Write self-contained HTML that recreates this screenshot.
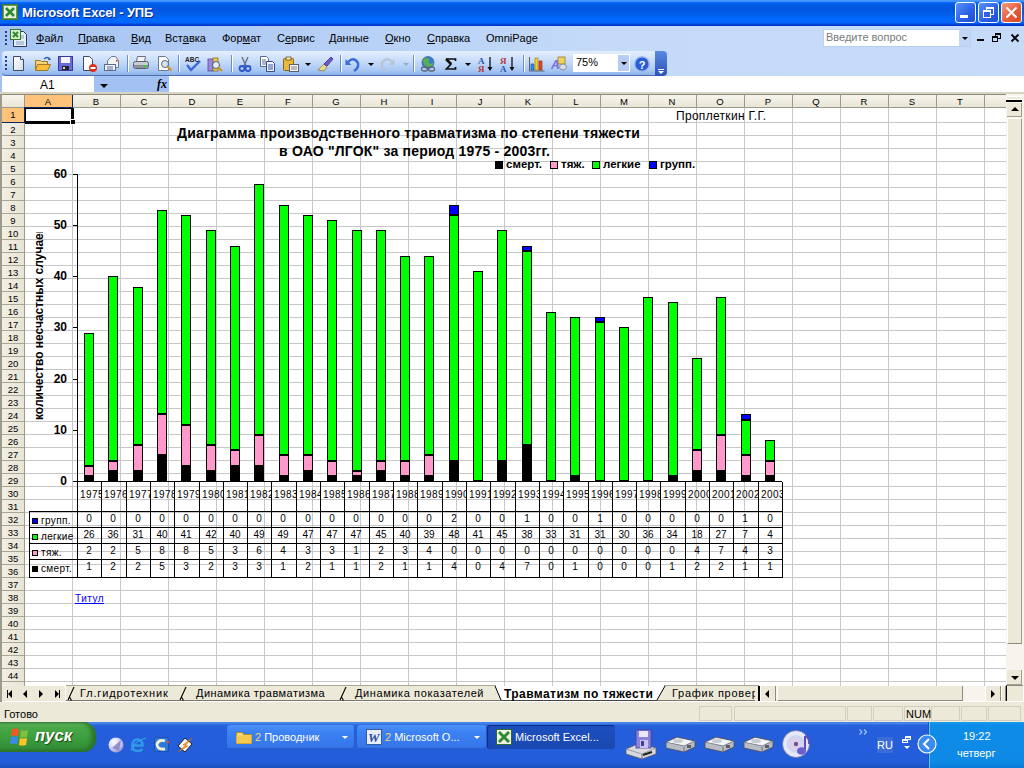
<!DOCTYPE html><html><head><meta charset="utf-8"><style>
*{margin:0;padding:0;box-sizing:border-box}
html,body{width:1024px;height:768px;overflow:hidden;background:#fff;font-family:"Liberation Sans",sans-serif;}
.ab{position:absolute}
.t{position:absolute;white-space:nowrap;line-height:1}
</style></head><body>
<div class="ab" style="left:0;top:0;width:1024px;height:26px;background:linear-gradient(to bottom,#4A98FF 0px,#3E90FF 1.5px,#0A6AF8 2.5px,#005CE6 4px,#0056DD 8px,#0058E2 11px,#0060EE 15px,#0068FF 18px,#0066FF 23px,#0046DA 24px,#0034C8 26px)"></div><svg class="ab" style="left:2px;top:4px" width="16" height="16" viewBox="0 0 16 16"><rect x="0.5" y="0.5" width="15" height="15" fill="#E8F0E0" stroke="#3F7A2C"/><rect x="1.5" y="1.5" width="13" height="13" fill="none" stroke="#6A9A50"/><path d="M4 4l8 8M12 4l-8 8" stroke="#2E8A2E" stroke-width="2.6"/></svg><div class="t" style="left:22px;top:6px;font-size:13px;letter-spacing:-0.15px;font-weight:bold;color:#fff;text-shadow:1px 1px 0 #0A2A8A">Microsoft Excel - УПБ</div><div class="ab" style="left:955px;top:2px;width:21px;height:21px;border:1px solid #fff;border-radius:3px;background:linear-gradient(135deg,#5B92F8,#2A5FE8 60%,#1E4FD8)"></div><div class="ab" style="left:978px;top:2px;width:21px;height:21px;border:1px solid #fff;border-radius:3px;background:linear-gradient(135deg,#5B92F8,#2A5FE8 60%,#1E4FD8)"></div><div class="ab" style="left:1001px;top:2px;width:21px;height:21px;border:1px solid #fff;border-radius:3px;background:linear-gradient(135deg,#F59A80,#E35A38 60%,#D24A28)"></div><div class="ab" style="left:960px;top:15px;width:8px;height:3px;background:#fff"></div><div class="ab" style="left:986px;top:7px;width:8px;height:8px;border:1px solid #fff;border-top-width:2px"></div><div class="ab" style="left:983px;top:10px;width:8px;height:8px;border:1px solid #fff;border-top-width:2px;background:#2D62E6"></div><svg class="ab" style="left:1005px;top:6px" width="13" height="13" viewBox="0 0 13 13"><path d="M1.5 1.5l10 10M11.5 1.5l-10 10" stroke="#fff" stroke-width="2"/></svg><div class="ab" style="left:0;top:26px;width:1024px;height:50px;background:linear-gradient(to right,#A6C4F2 0,#B4CEF5 300px,#C4DAF8 600px,#C6DBF8 100%)"></div><div class="ab" style="left:5px;top:31px;width:2px;height:14px;background:repeating-linear-gradient(to bottom,#27418A 0 2px,transparent 2px 4px)"></div><svg class="ab" style="left:10px;top:29px" width="17" height="18" viewBox="0 0 17 18"><path d="M3.5 2.5h10l3 3v12h-13z" fill="#E6EEF8" stroke="#2A3A60"/><path d="M10 7h4M10 9h4M6 13h8M6 15h8" stroke="#8AA0C8"/><rect x="0.5" y="0.5" width="10" height="10" fill="#D8ECD0" stroke="#3A7A2A"/><path d="M3 3l5 5M8 3l-5 5" stroke="#2E8A2E" stroke-width="2"/></svg><div class="t" style="left:36px;top:33px;font-size:11px;color:#000"><u>Ф</u>айл</div><div class="t" style="left:78px;top:33px;font-size:11px;color:#000"><u>П</u>равка</div><div class="t" style="left:131px;top:33px;font-size:11px;color:#000"><u>В</u>ид</div><div class="t" style="left:165px;top:33px;font-size:11px;color:#000">Вст<u>а</u>вка</div><div class="t" style="left:222px;top:33px;font-size:11px;color:#000">Фор<u>м</u>ат</div><div class="t" style="left:277px;top:33px;font-size:11px;color:#000">С<u>е</u>рвис</div><div class="t" style="left:329px;top:33px;font-size:11px;color:#000"><u>Д</u>анные</div><div class="t" style="left:385px;top:33px;font-size:11px;color:#000"><u>О</u>кно</div><div class="t" style="left:427px;top:33px;font-size:11px;color:#000"><u>С</u>правка</div><div class="t" style="left:486px;top:33px;font-size:11px;color:#000">OmniPage</div><div class="ab" style="left:823px;top:29px;width:148px;height:18px;background:#fff;border:1px solid #B9CFEF"></div><div class="ab" style="left:959px;top:30px;width:11px;height:16px;background:#C2D6F5"></div><div class="ab" style="left:962px;top:37px;width:0;height:0;border-left:3px solid transparent;border-right:3px solid transparent;border-top:3px solid #000"></div><div class="t" style="left:826px;top:32px;font-size:11px;color:#7A7A7A">Введите вопрос</div><div class="ab" style="left:977px;top:39px;width:7px;height:2px;background:#000"></div><div class="ab" style="left:995px;top:33px;width:6px;height:6px;border:1px solid #000;border-top-width:2px"></div><div class="ab" style="left:992px;top:36px;width:6px;height:6px;border:1px solid #000;border-top-width:2px;background:#C4D9F7"></div><svg class="ab" style="left:1010px;top:33px" width="10" height="10" viewBox="0 0 10 10"><path d="M1.5 1.5l7 7M8.5 1.5l-7 7" stroke="#000" stroke-width="1.8"/></svg><div class="ab" style="left:2px;top:51px;width:655px;height:25px;border-radius:4px 0 0 4px;background:linear-gradient(to bottom,#E3EFFE 0%,#C9DDFA 40%,#A8C8F4 80%,#8CB2EA 100%);border-bottom:1px solid #4A6FB0"></div><div class="ab" style="left:655px;top:51px;width:12px;height:25px;border-radius:0 4px 4px 0;background:linear-gradient(to bottom,#5A8AE0,#2A52B8)"></div><div class="ab" style="left:5px;top:56px;width:2px;height:16px;background:repeating-linear-gradient(to bottom,#27418A 0 2px,transparent 2px 4px)"></div><svg width="0" height="0" style="position:absolute"><defs><linearGradient id="gdoc" x1="0" y1="0" x2="1" y2="1"><stop offset="0" stop-color="#fff"/><stop offset="1" stop-color="#D8DCE6"/></linearGradient></defs></svg><svg class="ab" style="left:12px;top:56px" width="16" height="16" viewBox="0 0 16 16"><path d="M1.5 0.5h7l3 3v11h-10z" fill="#fff" stroke="#3A4A6A" stroke-width="1"/><path d="M2 1h6v3h3v10H2z" fill="url(#gdoc)"/><path d="M8.5 0.5v3h3" fill="#fff" stroke="#3A4A6A"/></svg><svg class="ab" style="left:35px;top:56px" width="16" height="16" viewBox="0 0 16 16"><path d="M0.5 4.5h5l1 1h6v8h-12z" fill="#F2D27A" stroke="#A07820"/><path d="M2.5 8.5h13l-3 6h-12z" fill="#F6BE3A" stroke="#A07820"/><path d="M9 3q3-3 6 0" fill="none" stroke="#2A5AA8" stroke-width="1.3"/><path d="M14 1.5l2 2.5h-3z" fill="#2A5AA8"/></svg><svg class="ab" style="left:58px;top:56px" width="16" height="16" viewBox="0 0 16 16"><rect x="0.5" y="0.5" width="14" height="14" fill="#6A6AD8" stroke="#3A3A98"/><rect x="3" y="1" width="9" height="6" fill="#F4F4FF"/><rect x="4" y="10" width="7" height="4" fill="#222"/><rect x="5" y="11" width="2" height="2" fill="#ddd"/></svg><svg class="ab" style="left:82px;top:56px" width="16" height="16" viewBox="0 0 16 16"><path d="M1.5 0.5h6l3 3v11h-9z" fill="#fff" stroke="#3A4A6A"/><circle cx="11" cy="12" r="4" fill="#D8301A"/><rect x="8.5" y="11" width="5" height="2" fill="#fff"/></svg><svg class="ab" style="left:104px;top:56px" width="16" height="16" viewBox="0 0 16 16"><path d="M3.5 4.5l4-4h4l3 4v7h-11z" fill="#F2F2F2" stroke="#6A7A90"/><rect x="12" y="4" width="1.5" height="1.5" fill="#D02020"/><rect x="0.5" y="8.5" width="11" height="6" fill="#EEF2FA" stroke="#5A6A88"/><path d="M3 11h6M3 13h6" stroke="#5A6A98"/></svg><svg class="ab" style="left:133px;top:56px" width="16" height="16" viewBox="0 0 16 16"><path d="M4.5 0.5h8l-1 5h-8z" fill="#F4F4F4" stroke="#6A7080"/><rect x="0.5" y="5.5" width="15" height="7" rx="2" fill="#C8CCD4" stroke="#5A6070"/><rect x="1" y="9" width="14" height="3" fill="#8A909C"/><rect x="11" y="9" width="2" height="2" fill="#20E020"/></svg><svg class="ab" style="left:157px;top:56px" width="16" height="16" viewBox="0 0 16 16"><path d="M1.5 0.5h7l3 3v11h-10z" fill="#fff" stroke="#6A7A90"/><circle cx="8" cy="8" r="3.5" fill="#D8E4F4" stroke="#5A6A80"/><path d="M10.5 10.5l4 4" stroke="#D89020" stroke-width="2.2"/></svg><svg class="ab" style="left:185px;top:56px" width="16" height="16" viewBox="0 0 16 16"><text x="0" y="6" font-family="Liberation Sans" font-weight="bold" font-size="6.5" fill="#222">ABC</text><path d="M2 9l4 5l9-9" fill="none" stroke="#3A66D8" stroke-width="2.4"/></svg><svg class="ab" style="left:207px;top:56px" width="16" height="16" viewBox="0 0 16 16"><rect x="1" y="3" width="5" height="12" fill="#9A88E0" stroke="#5A48A0" stroke-width="0.8"/><rect x="6" y="2" width="5" height="13" fill="#E8C860" stroke="#8A7020" stroke-width="0.8"/><circle cx="9" cy="9" r="3.5" fill="#E6ECF4" stroke="#4A5A70"/><path d="M11.5 11.5l3.5 3.5" stroke="#D89020" stroke-width="2.2"/></svg><svg class="ab" style="left:237px;top:56px" width="16" height="16" viewBox="0 0 16 16"><path d="M5 1l4 9M11 1l-4 9" stroke="#6A7080" stroke-width="1.4"/><circle cx="5" cy="12.5" r="2.5" fill="none" stroke="#2A56C8" stroke-width="1.8"/><circle cx="11" cy="12.5" r="2.5" fill="none" stroke="#2A56C8" stroke-width="1.8"/></svg><svg class="ab" style="left:260px;top:56px" width="16" height="16" viewBox="0 0 16 16"><path d="M0.5 0.5h6l2 2v8h-8z" fill="#fff" stroke="#5A6A90"/><path d="M2 4h4M2 6h4M2 8h4" stroke="#5A6A98"/><path d="M6.5 5.5h6l2 2v8h-8z" fill="#EEF2FA" stroke="#3A4A88"/><path d="M8 9h5M8 11h5M8 13h5" stroke="#3A5AA8"/></svg><svg class="ab" style="left:283px;top:56px" width="16" height="16" viewBox="0 0 16 16"><rect x="0.5" y="2.5" width="10" height="12" rx="1" fill="#E8B838" stroke="#8A6A10"/><rect x="3" y="1" width="5" height="3" fill="#F4E8B0" stroke="#6A5A20" stroke-width="0.8"/><rect x="6.5" y="8.5" width="9" height="7" fill="#F4F4F4" stroke="#5A6070"/><path d="M8 11h6M8 13h6" stroke="#7A8090"/></svg><svg class="ab" style="left:317px;top:56px" width="16" height="16" viewBox="0 0 16 16"><path d="M1 14l6-6l3 3l-3 4z" fill="#E8D890" stroke="#8A7A30" stroke-width="0.8"/><path d="M7 8l7-7l2 2l-6 7z" fill="#6A5AC8" stroke="#3A2A88" stroke-width="0.8"/><path d="M3 12l4-4" stroke="#A89A50"/></svg><svg class="ab" style="left:345px;top:56px" width="16" height="16" viewBox="0 0 16 16"><path d="M3 6q6-6 10 1q1 5-4 8" fill="none" stroke="#3A6AD8" stroke-width="2.4"/><path d="M0.5 3v6h6z" fill="#3A6AD8"/></svg><svg class="ab" style="left:379px;top:56px" width="16" height="16" viewBox="0 0 16 16"><path d="M13 6q-6-6-10 1q-1 5 4 8" fill="none" stroke="#B8C4D8" stroke-width="2.4"/><path d="M15.5 3v6h-6z" fill="#B8C4D8"/></svg><svg class="ab" style="left:420px;top:56px" width="16" height="16" viewBox="0 0 16 16"><circle cx="8" cy="6.5" r="6" fill="#3A7AD8" stroke="#2A4A8A" stroke-width="0.6"/><path d="M3 4q2-3 5-2q2 1 1 3q-1 2 1 3q2 0 3-2q1 2-1 4q-3 2-6 0q-3-2-3-6z" fill="#5AB04A"/><rect x="1.5" y="11" width="6" height="4" rx="2" fill="none" stroke="#5A6A80" stroke-width="1.3"/><rect x="8.5" y="11" width="6" height="4" rx="2" fill="none" stroke="#5A6A80" stroke-width="1.3"/></svg><svg class="ab" style="left:443px;top:56px" width="16" height="16" viewBox="0 0 16 16"><path d="M3 3h9.5v2M3.5 3l4.5 5l-4.5 5h9v-2" fill="none" stroke="#111" stroke-width="1.7"/><path d="M3 3l5 5" stroke="#111" stroke-width="2.6"/></svg><svg class="ab" style="left:478px;top:56px" width="16" height="16" viewBox="0 0 16 16"><text x="0" y="7.5" font-family="Liberation Serif" font-weight="bold" font-size="9" fill="#2A56B8">A</text><text x="0" y="16" font-family="Liberation Serif" font-weight="bold" font-size="9" fill="#B83A3A">Я</text><path d="M12 1v13" stroke="#111" stroke-width="1.3"/><path d="M9.5 11l2.5 4l2.5-4z" fill="#111"/></svg><svg class="ab" style="left:500px;top:56px" width="16" height="16" viewBox="0 0 16 16"><text x="0" y="7.5" font-family="Liberation Serif" font-weight="bold" font-size="9" fill="#B83A3A">Я</text><text x="0" y="16" font-family="Liberation Serif" font-weight="bold" font-size="9" fill="#2A56B8">A</text><path d="M12 1v13" stroke="#111" stroke-width="1.3"/><path d="M9.5 11l2.5 4l2.5-4z" fill="#111"/></svg><svg class="ab" style="left:529px;top:56px" width="16" height="16" viewBox="0 0 16 16"><path d="M0.5 1v14h15" fill="none" stroke="#5A6070"/><rect x="2" y="8" width="3" height="6" fill="#3A8AE8" stroke="#1A4A98" stroke-width="0.6"/><rect x="6" y="2" width="3" height="12" fill="#F0D030" stroke="#9A7A10" stroke-width="0.6"/><rect x="10" y="5" width="3" height="9" fill="#E04A2A" stroke="#8A2A10" stroke-width="0.6"/></svg><svg class="ab" style="left:551px;top:56px" width="16" height="16" viewBox="0 0 16 16"><rect x="7" y="1" width="7" height="7" fill="#F0D060" stroke="#9A8030" stroke-width="0.8"/><text x="0" y="13" font-family="Liberation Sans" font-style="italic" font-weight="bold" font-size="12" fill="#7A6AD8">A</text><ellipse cx="12" cy="11" rx="3.5" ry="3" fill="#D8DCE4" stroke="#7A808C" stroke-width="0.8"/></svg><svg class="ab" style="left:634px;top:56px" width="16" height="16" viewBox="0 0 16 16"><circle cx="8" cy="8" r="7.2" fill="#2A5ED8" stroke="#9AB4E8" stroke-width="1.2"/><text x="8" y="12.5" text-anchor="middle" font-family="Liberation Sans" font-weight="bold" font-size="11" fill="#fff">?</text></svg><div class="ab" style="left:127px;top:55px;width:1px;height:17px;background:#6A8CC8;box-shadow:1px 0 0 #fff"></div><div class="ab" style="left:178px;top:55px;width:1px;height:17px;background:#6A8CC8;box-shadow:1px 0 0 #fff"></div><div class="ab" style="left:231px;top:55px;width:1px;height:17px;background:#6A8CC8;box-shadow:1px 0 0 #fff"></div><div class="ab" style="left:340px;top:55px;width:1px;height:17px;background:#6A8CC8;box-shadow:1px 0 0 #fff"></div><div class="ab" style="left:413px;top:55px;width:1px;height:17px;background:#6A8CC8;box-shadow:1px 0 0 #fff"></div><div class="ab" style="left:523px;top:55px;width:1px;height:17px;background:#6A8CC8;box-shadow:1px 0 0 #fff"></div><div class="ab" style="left:305px;top:63px;width:0;height:0;border-left:3px solid transparent;border-right:3px solid transparent;border-top:3px solid #000"></div><div class="ab" style="left:368px;top:63px;width:0;height:0;border-left:3px solid transparent;border-right:3px solid transparent;border-top:3px solid #000"></div><div class="ab" style="left:403px;top:63px;width:0;height:0;border-left:3px solid transparent;border-right:3px solid transparent;border-top:3px solid #9AAAC4"></div><div class="ab" style="left:465px;top:63px;width:0;height:0;border-left:3px solid transparent;border-right:3px solid transparent;border-top:3px solid #000"></div><div class="ab" style="left:573px;top:54px;width:57px;height:18px;background:#fff;border:1px solid #fff"></div><div class="ab" style="left:618px;top:55px;width:11px;height:16px;background:#B6CCF2"></div><div class="ab" style="left:621px;top:62px;width:0;height:0;border-left:3px solid transparent;border-right:3px solid transparent;border-top:3px solid #000"></div><div class="t" style="left:576px;top:57px;font-size:11px;color:#000">75%</div><div class="ab" style="left:658px;top:69px;width:6px;height:1px;background:#fff"></div><div class="ab" style="left:658px;top:71px;width:0;height:0;border-left:3px solid transparent;border-right:3px solid transparent;border-top:3px solid #fff"></div><div class="ab" style="left:0;top:76px;width:1024px;height:17px;background:#fff"></div><div class="ab" style="left:0;top:76px;width:2px;height:17px;background:#A3C1F2"></div><div class="ab" style="left:94px;top:76px;width:75px;height:17px;background:#A3C1F2"></div><div class="t" style="left:40px;top:79px;font-size:12px;color:#000">A1</div><div class="ab" style="left:100px;top:84px;width:0;height:0;border-left:4px solid transparent;border-right:4px solid transparent;border-top:4px solid #000"></div><div class="t" style="left:157px;top:78px;font-size:12px;font-style:italic;font-family:'Liberation Serif',serif;font-weight:bold;color:#000">fx</div><div class="ab" style="left:0;top:92px;width:1024px;height:2px;background:#D8D4C4"></div><div class="ab" style="left:0;top:94px;width:1024px;height:592px;background:#fff"></div><div class="ab" style="left:0;top:94px;width:2px;height:608px;background:#9C9A8C"></div><div class="ab" style="left:2px;top:94px;width:1004px;height:14px;background:linear-gradient(#F6F4EC,#E9E5D6);border-top:1px solid #8E8B7A;border-bottom:1px solid #9C9A8C"></div><div class="ab" style="left:2px;top:108px;width:22px;height:578px;background:linear-gradient(to right,#F2EFE4,#E8E4D5)"></div><div class="ab" style="left:25px;top:108px;width:981px;height:578px;background:repeating-linear-gradient(to right,transparent 0 47px,#C8C8C8 47px 48px)"></div><div class="ab" style="left:25px;top:110px;width:981px;height:576px;background:repeating-linear-gradient(to bottom,transparent 0 12px,#C8C8C8 12px 13px)"></div><div class="ab" style="left:25px;top:108px;width:981px;height:15px;background:#fff;border-bottom:1px solid #C8C8C8"></div><div class="ab" style="left:25px;top:108px;width:981px;height:15px;background:repeating-linear-gradient(to right,transparent 0 47px,#C8C8C8 47px 48px)"></div><div class="ab" style="left:24px;top:95px;width:49px;height:12px;background:#FFC27A"></div><div class="ab" style="left:24px;top:95px;width:1px;height:13px;background:#9C9A8C"></div><div class="t" style="left:24px;top:96.5px;width:48px;text-align:center;font-size:9.5px;color:#000">A</div><div class="ab" style="left:72px;top:95px;width:1px;height:13px;background:#9C9A8C"></div><div class="t" style="left:72px;top:96.5px;width:48px;text-align:center;font-size:9.5px;color:#000">B</div><div class="ab" style="left:120px;top:95px;width:1px;height:13px;background:#9C9A8C"></div><div class="t" style="left:120px;top:96.5px;width:48px;text-align:center;font-size:9.5px;color:#000">C</div><div class="ab" style="left:168px;top:95px;width:1px;height:13px;background:#9C9A8C"></div><div class="t" style="left:168px;top:96.5px;width:48px;text-align:center;font-size:9.5px;color:#000">D</div><div class="ab" style="left:216px;top:95px;width:1px;height:13px;background:#9C9A8C"></div><div class="t" style="left:216px;top:96.5px;width:48px;text-align:center;font-size:9.5px;color:#000">E</div><div class="ab" style="left:264px;top:95px;width:1px;height:13px;background:#9C9A8C"></div><div class="t" style="left:264px;top:96.5px;width:48px;text-align:center;font-size:9.5px;color:#000">F</div><div class="ab" style="left:312px;top:95px;width:1px;height:13px;background:#9C9A8C"></div><div class="t" style="left:312px;top:96.5px;width:48px;text-align:center;font-size:9.5px;color:#000">G</div><div class="ab" style="left:360px;top:95px;width:1px;height:13px;background:#9C9A8C"></div><div class="t" style="left:360px;top:96.5px;width:48px;text-align:center;font-size:9.5px;color:#000">H</div><div class="ab" style="left:408px;top:95px;width:1px;height:13px;background:#9C9A8C"></div><div class="t" style="left:408px;top:96.5px;width:48px;text-align:center;font-size:9.5px;color:#000">I</div><div class="ab" style="left:456px;top:95px;width:1px;height:13px;background:#9C9A8C"></div><div class="t" style="left:456px;top:96.5px;width:48px;text-align:center;font-size:9.5px;color:#000">J</div><div class="ab" style="left:504px;top:95px;width:1px;height:13px;background:#9C9A8C"></div><div class="t" style="left:504px;top:96.5px;width:48px;text-align:center;font-size:9.5px;color:#000">K</div><div class="ab" style="left:552px;top:95px;width:1px;height:13px;background:#9C9A8C"></div><div class="t" style="left:552px;top:96.5px;width:48px;text-align:center;font-size:9.5px;color:#000">L</div><div class="ab" style="left:600px;top:95px;width:1px;height:13px;background:#9C9A8C"></div><div class="t" style="left:600px;top:96.5px;width:48px;text-align:center;font-size:9.5px;color:#000">M</div><div class="ab" style="left:648px;top:95px;width:1px;height:13px;background:#9C9A8C"></div><div class="t" style="left:648px;top:96.5px;width:48px;text-align:center;font-size:9.5px;color:#000">N</div><div class="ab" style="left:696px;top:95px;width:1px;height:13px;background:#9C9A8C"></div><div class="t" style="left:696px;top:96.5px;width:48px;text-align:center;font-size:9.5px;color:#000">O</div><div class="ab" style="left:744px;top:95px;width:1px;height:13px;background:#9C9A8C"></div><div class="t" style="left:744px;top:96.5px;width:48px;text-align:center;font-size:9.5px;color:#000">P</div><div class="ab" style="left:792px;top:95px;width:1px;height:13px;background:#9C9A8C"></div><div class="t" style="left:792px;top:96.5px;width:48px;text-align:center;font-size:9.5px;color:#000">Q</div><div class="ab" style="left:840px;top:95px;width:1px;height:13px;background:#9C9A8C"></div><div class="t" style="left:840px;top:96.5px;width:48px;text-align:center;font-size:9.5px;color:#000">R</div><div class="ab" style="left:888px;top:95px;width:1px;height:13px;background:#9C9A8C"></div><div class="t" style="left:888px;top:96.5px;width:48px;text-align:center;font-size:9.5px;color:#000">S</div><div class="ab" style="left:936px;top:95px;width:1px;height:13px;background:#9C9A8C"></div><div class="t" style="left:936px;top:96.5px;width:48px;text-align:center;font-size:9.5px;color:#000">T</div><div class="ab" style="left:984px;top:95px;width:1px;height:13px;background:#9C9A8C"></div><div class="ab" style="left:72px;top:95px;width:1px;height:13px;background:#0A246A"></div><div class="ab" style="left:24px;top:107px;width:49px;height:1px;background:#0A246A"></div><div class="ab" style="left:2px;top:108px;width:22px;height:14px;background:#FFC27A"></div><div class="ab" style="left:2px;top:122px;width:22px;height:1px;background:#A9A694"></div><div class="t" style="left:2px;top:110px;width:22px;text-align:center;font-size:9.5px;color:#000">1</div><div class="ab" style="left:2px;top:135px;width:22px;height:1px;background:#A9A694"></div><div class="t" style="left:2px;top:125px;width:22px;text-align:center;font-size:9.5px;color:#000">2</div><div class="ab" style="left:2px;top:148px;width:22px;height:1px;background:#A9A694"></div><div class="t" style="left:2px;top:138px;width:22px;text-align:center;font-size:9.5px;color:#000">3</div><div class="ab" style="left:2px;top:161px;width:22px;height:1px;background:#A9A694"></div><div class="t" style="left:2px;top:151px;width:22px;text-align:center;font-size:9.5px;color:#000">4</div><div class="ab" style="left:2px;top:174px;width:22px;height:1px;background:#A9A694"></div><div class="t" style="left:2px;top:164px;width:22px;text-align:center;font-size:9.5px;color:#000">5</div><div class="ab" style="left:2px;top:187px;width:22px;height:1px;background:#A9A694"></div><div class="t" style="left:2px;top:177px;width:22px;text-align:center;font-size:9.5px;color:#000">6</div><div class="ab" style="left:2px;top:200px;width:22px;height:1px;background:#A9A694"></div><div class="t" style="left:2px;top:190px;width:22px;text-align:center;font-size:9.5px;color:#000">7</div><div class="ab" style="left:2px;top:213px;width:22px;height:1px;background:#A9A694"></div><div class="t" style="left:2px;top:203px;width:22px;text-align:center;font-size:9.5px;color:#000">8</div><div class="ab" style="left:2px;top:226px;width:22px;height:1px;background:#A9A694"></div><div class="t" style="left:2px;top:216px;width:22px;text-align:center;font-size:9.5px;color:#000">9</div><div class="ab" style="left:2px;top:239px;width:22px;height:1px;background:#A9A694"></div><div class="t" style="left:2px;top:229px;width:22px;text-align:center;font-size:9.5px;color:#000">10</div><div class="ab" style="left:2px;top:252px;width:22px;height:1px;background:#A9A694"></div><div class="t" style="left:2px;top:242px;width:22px;text-align:center;font-size:9.5px;color:#000">11</div><div class="ab" style="left:2px;top:265px;width:22px;height:1px;background:#A9A694"></div><div class="t" style="left:2px;top:255px;width:22px;text-align:center;font-size:9.5px;color:#000">12</div><div class="ab" style="left:2px;top:278px;width:22px;height:1px;background:#A9A694"></div><div class="t" style="left:2px;top:268px;width:22px;text-align:center;font-size:9.5px;color:#000">13</div><div class="ab" style="left:2px;top:291px;width:22px;height:1px;background:#A9A694"></div><div class="t" style="left:2px;top:281px;width:22px;text-align:center;font-size:9.5px;color:#000">14</div><div class="ab" style="left:2px;top:304px;width:22px;height:1px;background:#A9A694"></div><div class="t" style="left:2px;top:294px;width:22px;text-align:center;font-size:9.5px;color:#000">15</div><div class="ab" style="left:2px;top:317px;width:22px;height:1px;background:#A9A694"></div><div class="t" style="left:2px;top:307px;width:22px;text-align:center;font-size:9.5px;color:#000">16</div><div class="ab" style="left:2px;top:330px;width:22px;height:1px;background:#A9A694"></div><div class="t" style="left:2px;top:320px;width:22px;text-align:center;font-size:9.5px;color:#000">17</div><div class="ab" style="left:2px;top:343px;width:22px;height:1px;background:#A9A694"></div><div class="t" style="left:2px;top:333px;width:22px;text-align:center;font-size:9.5px;color:#000">18</div><div class="ab" style="left:2px;top:356px;width:22px;height:1px;background:#A9A694"></div><div class="t" style="left:2px;top:346px;width:22px;text-align:center;font-size:9.5px;color:#000">19</div><div class="ab" style="left:2px;top:369px;width:22px;height:1px;background:#A9A694"></div><div class="t" style="left:2px;top:359px;width:22px;text-align:center;font-size:9.5px;color:#000">20</div><div class="ab" style="left:2px;top:382px;width:22px;height:1px;background:#A9A694"></div><div class="t" style="left:2px;top:372px;width:22px;text-align:center;font-size:9.5px;color:#000">21</div><div class="ab" style="left:2px;top:395px;width:22px;height:1px;background:#A9A694"></div><div class="t" style="left:2px;top:385px;width:22px;text-align:center;font-size:9.5px;color:#000">22</div><div class="ab" style="left:2px;top:408px;width:22px;height:1px;background:#A9A694"></div><div class="t" style="left:2px;top:398px;width:22px;text-align:center;font-size:9.5px;color:#000">23</div><div class="ab" style="left:2px;top:421px;width:22px;height:1px;background:#A9A694"></div><div class="t" style="left:2px;top:411px;width:22px;text-align:center;font-size:9.5px;color:#000">24</div><div class="ab" style="left:2px;top:434px;width:22px;height:1px;background:#A9A694"></div><div class="t" style="left:2px;top:424px;width:22px;text-align:center;font-size:9.5px;color:#000">25</div><div class="ab" style="left:2px;top:447px;width:22px;height:1px;background:#A9A694"></div><div class="t" style="left:2px;top:437px;width:22px;text-align:center;font-size:9.5px;color:#000">26</div><div class="ab" style="left:2px;top:460px;width:22px;height:1px;background:#A9A694"></div><div class="t" style="left:2px;top:450px;width:22px;text-align:center;font-size:9.5px;color:#000">27</div><div class="ab" style="left:2px;top:473px;width:22px;height:1px;background:#A9A694"></div><div class="t" style="left:2px;top:463px;width:22px;text-align:center;font-size:9.5px;color:#000">28</div><div class="ab" style="left:2px;top:486px;width:22px;height:1px;background:#A9A694"></div><div class="t" style="left:2px;top:476px;width:22px;text-align:center;font-size:9.5px;color:#000">29</div><div class="ab" style="left:2px;top:499px;width:22px;height:1px;background:#A9A694"></div><div class="t" style="left:2px;top:489px;width:22px;text-align:center;font-size:9.5px;color:#000">30</div><div class="ab" style="left:2px;top:512px;width:22px;height:1px;background:#A9A694"></div><div class="t" style="left:2px;top:502px;width:22px;text-align:center;font-size:9.5px;color:#000">31</div><div class="ab" style="left:2px;top:525px;width:22px;height:1px;background:#A9A694"></div><div class="t" style="left:2px;top:515px;width:22px;text-align:center;font-size:9.5px;color:#000">32</div><div class="ab" style="left:2px;top:538px;width:22px;height:1px;background:#A9A694"></div><div class="t" style="left:2px;top:528px;width:22px;text-align:center;font-size:9.5px;color:#000">33</div><div class="ab" style="left:2px;top:551px;width:22px;height:1px;background:#A9A694"></div><div class="t" style="left:2px;top:541px;width:22px;text-align:center;font-size:9.5px;color:#000">34</div><div class="ab" style="left:2px;top:564px;width:22px;height:1px;background:#A9A694"></div><div class="t" style="left:2px;top:554px;width:22px;text-align:center;font-size:9.5px;color:#000">35</div><div class="ab" style="left:2px;top:577px;width:22px;height:1px;background:#A9A694"></div><div class="t" style="left:2px;top:567px;width:22px;text-align:center;font-size:9.5px;color:#000">36</div><div class="ab" style="left:2px;top:590px;width:22px;height:1px;background:#A9A694"></div><div class="t" style="left:2px;top:580px;width:22px;text-align:center;font-size:9.5px;color:#000">37</div><div class="ab" style="left:2px;top:603px;width:22px;height:1px;background:#A9A694"></div><div class="t" style="left:2px;top:593px;width:22px;text-align:center;font-size:9.5px;color:#000">38</div><div class="ab" style="left:2px;top:616px;width:22px;height:1px;background:#A9A694"></div><div class="t" style="left:2px;top:606px;width:22px;text-align:center;font-size:9.5px;color:#000">39</div><div class="ab" style="left:2px;top:629px;width:22px;height:1px;background:#A9A694"></div><div class="t" style="left:2px;top:619px;width:22px;text-align:center;font-size:9.5px;color:#000">40</div><div class="ab" style="left:2px;top:642px;width:22px;height:1px;background:#A9A694"></div><div class="t" style="left:2px;top:632px;width:22px;text-align:center;font-size:9.5px;color:#000">41</div><div class="ab" style="left:2px;top:655px;width:22px;height:1px;background:#A9A694"></div><div class="t" style="left:2px;top:645px;width:22px;text-align:center;font-size:9.5px;color:#000">42</div><div class="ab" style="left:2px;top:668px;width:22px;height:1px;background:#A9A694"></div><div class="t" style="left:2px;top:658px;width:22px;text-align:center;font-size:9.5px;color:#000">43</div><div class="ab" style="left:2px;top:681px;width:22px;height:1px;background:#A9A694"></div><div class="t" style="left:2px;top:671px;width:22px;text-align:center;font-size:9.5px;color:#000">44</div><div class="ab" style="left:2px;top:694px;width:22px;height:1px;background:#A9A694"></div><div class="ab" style="left:2px;top:122px;width:23px;height:1px;background:#0A246A"></div><div class="ab" style="left:24px;top:108px;width:1px;height:578px;background:#9C9A8C"></div><div class="ab" style="left:24px;top:108px;width:1px;height:15px;background:#0A246A"></div><div class="ab" style="left:25px;top:108px;width:49px;height:16px;border-left:1px solid #000;border-top:1px solid #000;border-right:3px solid #000;border-bottom:3px solid #000"></div><div class="ab" style="left:70px;top:119px;width:5px;height:6px;background:#fff"></div><div class="ab" style="left:71px;top:120px;width:4px;height:4px;background:#000"></div><div class="t" style="top:126px;left:177px;font-size:14px;letter-spacing:0.2px;font-weight:bold;color:#000">Диаграмма производственного травматизма по степени тяжести</div><div class="t" style="left:279px;top:144px;font-size:14px;letter-spacing:0.2px;font-weight:bold;color:#000">в ОАО "ЛГОК" за период 1975 - 2003гг.</div><div class="ab" style="left:495px;top:161px;width:8px;height:8px;background:#000;border:1px solid #000"></div><div class="t" style="left:506px;top:159px;font-size:11.5px;font-weight:bold;color:#000">смерт.</div><div class="ab" style="left:550px;top:161px;width:8px;height:8px;background:#FF99CC;border:1px solid #000"></div><div class="t" style="left:561px;top:159px;font-size:11.5px;font-weight:bold;color:#000">тяж.</div><div class="ab" style="left:592px;top:161px;width:8px;height:8px;background:#00FF00;border:1px solid #000"></div><div class="t" style="left:603px;top:159px;font-size:11.5px;font-weight:bold;color:#000">легкие</div><div class="ab" style="left:649px;top:161px;width:8px;height:8px;background:#0000FF;border:1px solid #000"></div><div class="t" style="left:660px;top:159px;font-size:11.5px;font-weight:bold;color:#000">групп.</div><div class="t" style="left:676px;top:110px;font-size:12px;letter-spacing:0.3px;color:#000">Проплеткин Г.Г.</div><div class="ab" style="left:77px;top:174px;width:1px;height:308px;background:#000"></div><div class="ab" style="left:77px;top:481px;width:705px;height:1px;background:#000"></div><div class="ab" style="left:73px;top:481px;width:5px;height:1px;background:#000"></div><div class="t" style="left:40px;top:475px;width:27px;text-align:right;font-size:12px;font-weight:bold;color:#000">0</div><div class="ab" style="left:73px;top:430px;width:5px;height:1px;background:#000"></div><div class="t" style="left:40px;top:424px;width:27px;text-align:right;font-size:12px;font-weight:bold;color:#000">10</div><div class="ab" style="left:73px;top:379px;width:5px;height:1px;background:#000"></div><div class="t" style="left:40px;top:373px;width:27px;text-align:right;font-size:12px;font-weight:bold;color:#000">20</div><div class="ab" style="left:73px;top:327px;width:5px;height:1px;background:#000"></div><div class="t" style="left:40px;top:321px;width:27px;text-align:right;font-size:12px;font-weight:bold;color:#000">30</div><div class="ab" style="left:73px;top:276px;width:5px;height:1px;background:#000"></div><div class="t" style="left:40px;top:270px;width:27px;text-align:right;font-size:12px;font-weight:bold;color:#000">40</div><div class="ab" style="left:73px;top:225px;width:5px;height:1px;background:#000"></div><div class="t" style="left:40px;top:219px;width:27px;text-align:right;font-size:12px;font-weight:bold;color:#000">50</div><div class="ab" style="left:73px;top:174px;width:5px;height:1px;background:#000"></div><div class="t" style="left:40px;top:168px;width:27px;text-align:right;font-size:12px;font-weight:bold;color:#000">60</div><div class="ab" style="left:29px;top:232px;width:20px;height:188px;overflow:hidden"><div class="t" style="left:10px;top:188px;transform:rotate(-90deg);transform-origin:0 0;font-size:12px;font-weight:bold;color:#000;margin-left:-6px">количество несчастных случаев</div></div><div class="ab" style="left:84px;top:476px;width:10px;height:5px;background:#000;border:1px solid #000"></div><div class="ab" style="left:84px;top:466px;width:10px;height:10px;background:#FF99CC;border:1px solid #000"></div><div class="ab" style="left:84px;top:333px;width:10px;height:133px;background:#00FF00;border:1px solid #000"></div><div class="ab" style="left:108px;top:471px;width:10px;height:10px;background:#000;border:1px solid #000"></div><div class="ab" style="left:108px;top:461px;width:10px;height:10px;background:#FF99CC;border:1px solid #000"></div><div class="ab" style="left:108px;top:276px;width:10px;height:185px;background:#00FF00;border:1px solid #000"></div><div class="ab" style="left:133px;top:471px;width:10px;height:10px;background:#000;border:1px solid #000"></div><div class="ab" style="left:133px;top:445px;width:10px;height:26px;background:#FF99CC;border:1px solid #000"></div><div class="ab" style="left:133px;top:287px;width:10px;height:158px;background:#00FF00;border:1px solid #000"></div><div class="ab" style="left:157px;top:455px;width:10px;height:26px;background:#000;border:1px solid #000"></div><div class="ab" style="left:157px;top:414px;width:10px;height:41px;background:#FF99CC;border:1px solid #000"></div><div class="ab" style="left:157px;top:210px;width:10px;height:204px;background:#00FF00;border:1px solid #000"></div><div class="ab" style="left:181px;top:466px;width:10px;height:15px;background:#000;border:1px solid #000"></div><div class="ab" style="left:181px;top:425px;width:10px;height:41px;background:#FF99CC;border:1px solid #000"></div><div class="ab" style="left:181px;top:215px;width:10px;height:210px;background:#00FF00;border:1px solid #000"></div><div class="ab" style="left:206px;top:471px;width:10px;height:10px;background:#000;border:1px solid #000"></div><div class="ab" style="left:206px;top:445px;width:10px;height:26px;background:#FF99CC;border:1px solid #000"></div><div class="ab" style="left:206px;top:230px;width:10px;height:215px;background:#00FF00;border:1px solid #000"></div><div class="ab" style="left:230px;top:466px;width:10px;height:15px;background:#000;border:1px solid #000"></div><div class="ab" style="left:230px;top:450px;width:10px;height:16px;background:#FF99CC;border:1px solid #000"></div><div class="ab" style="left:230px;top:246px;width:10px;height:204px;background:#00FF00;border:1px solid #000"></div><div class="ab" style="left:254px;top:466px;width:10px;height:15px;background:#000;border:1px solid #000"></div><div class="ab" style="left:254px;top:435px;width:10px;height:31px;background:#FF99CC;border:1px solid #000"></div><div class="ab" style="left:254px;top:184px;width:10px;height:251px;background:#00FF00;border:1px solid #000"></div><div class="ab" style="left:279px;top:476px;width:10px;height:5px;background:#000;border:1px solid #000"></div><div class="ab" style="left:279px;top:455px;width:10px;height:21px;background:#FF99CC;border:1px solid #000"></div><div class="ab" style="left:279px;top:205px;width:10px;height:250px;background:#00FF00;border:1px solid #000"></div><div class="ab" style="left:303px;top:471px;width:10px;height:10px;background:#000;border:1px solid #000"></div><div class="ab" style="left:303px;top:455px;width:10px;height:16px;background:#FF99CC;border:1px solid #000"></div><div class="ab" style="left:303px;top:215px;width:10px;height:240px;background:#00FF00;border:1px solid #000"></div><div class="ab" style="left:327px;top:476px;width:10px;height:5px;background:#000;border:1px solid #000"></div><div class="ab" style="left:327px;top:461px;width:10px;height:15px;background:#FF99CC;border:1px solid #000"></div><div class="ab" style="left:327px;top:220px;width:10px;height:241px;background:#00FF00;border:1px solid #000"></div><div class="ab" style="left:352px;top:476px;width:10px;height:5px;background:#000;border:1px solid #000"></div><div class="ab" style="left:352px;top:471px;width:10px;height:5px;background:#FF99CC;border:1px solid #000"></div><div class="ab" style="left:352px;top:230px;width:10px;height:241px;background:#00FF00;border:1px solid #000"></div><div class="ab" style="left:376px;top:471px;width:10px;height:10px;background:#000;border:1px solid #000"></div><div class="ab" style="left:376px;top:461px;width:10px;height:10px;background:#FF99CC;border:1px solid #000"></div><div class="ab" style="left:376px;top:230px;width:10px;height:231px;background:#00FF00;border:1px solid #000"></div><div class="ab" style="left:400px;top:476px;width:10px;height:5px;background:#000;border:1px solid #000"></div><div class="ab" style="left:400px;top:461px;width:10px;height:15px;background:#FF99CC;border:1px solid #000"></div><div class="ab" style="left:400px;top:256px;width:10px;height:205px;background:#00FF00;border:1px solid #000"></div><div class="ab" style="left:424px;top:476px;width:10px;height:5px;background:#000;border:1px solid #000"></div><div class="ab" style="left:424px;top:455px;width:10px;height:21px;background:#FF99CC;border:1px solid #000"></div><div class="ab" style="left:424px;top:256px;width:10px;height:199px;background:#00FF00;border:1px solid #000"></div><div class="ab" style="left:449px;top:461px;width:10px;height:20px;background:#000;border:1px solid #000"></div><div class="ab" style="left:449px;top:215px;width:10px;height:246px;background:#00FF00;border:1px solid #000"></div><div class="ab" style="left:449px;top:205px;width:10px;height:10px;background:#0000FF;border:1px solid #000"></div><div class="ab" style="left:473px;top:271px;width:10px;height:210px;background:#00FF00;border:1px solid #000"></div><div class="ab" style="left:497px;top:461px;width:10px;height:20px;background:#000;border:1px solid #000"></div><div class="ab" style="left:497px;top:230px;width:10px;height:231px;background:#00FF00;border:1px solid #000"></div><div class="ab" style="left:522px;top:445px;width:10px;height:36px;background:#000;border:1px solid #000"></div><div class="ab" style="left:522px;top:251px;width:10px;height:194px;background:#00FF00;border:1px solid #000"></div><div class="ab" style="left:522px;top:246px;width:10px;height:5px;background:#0000FF;border:1px solid #000"></div><div class="ab" style="left:546px;top:312px;width:10px;height:169px;background:#00FF00;border:1px solid #000"></div><div class="ab" style="left:570px;top:476px;width:10px;height:5px;background:#000;border:1px solid #000"></div><div class="ab" style="left:570px;top:317px;width:10px;height:159px;background:#00FF00;border:1px solid #000"></div><div class="ab" style="left:595px;top:322px;width:10px;height:159px;background:#00FF00;border:1px solid #000"></div><div class="ab" style="left:595px;top:317px;width:10px;height:5px;background:#0000FF;border:1px solid #000"></div><div class="ab" style="left:619px;top:327px;width:10px;height:154px;background:#00FF00;border:1px solid #000"></div><div class="ab" style="left:643px;top:297px;width:10px;height:184px;background:#00FF00;border:1px solid #000"></div><div class="ab" style="left:668px;top:476px;width:10px;height:5px;background:#000;border:1px solid #000"></div><div class="ab" style="left:668px;top:302px;width:10px;height:174px;background:#00FF00;border:1px solid #000"></div><div class="ab" style="left:692px;top:471px;width:10px;height:10px;background:#000;border:1px solid #000"></div><div class="ab" style="left:692px;top:450px;width:10px;height:21px;background:#FF99CC;border:1px solid #000"></div><div class="ab" style="left:692px;top:358px;width:10px;height:92px;background:#00FF00;border:1px solid #000"></div><div class="ab" style="left:716px;top:471px;width:10px;height:10px;background:#000;border:1px solid #000"></div><div class="ab" style="left:716px;top:435px;width:10px;height:36px;background:#FF99CC;border:1px solid #000"></div><div class="ab" style="left:716px;top:297px;width:10px;height:138px;background:#00FF00;border:1px solid #000"></div><div class="ab" style="left:741px;top:476px;width:10px;height:5px;background:#000;border:1px solid #000"></div><div class="ab" style="left:741px;top:455px;width:10px;height:21px;background:#FF99CC;border:1px solid #000"></div><div class="ab" style="left:741px;top:420px;width:10px;height:35px;background:#00FF00;border:1px solid #000"></div><div class="ab" style="left:741px;top:414px;width:10px;height:6px;background:#0000FF;border:1px solid #000"></div><div class="ab" style="left:765px;top:476px;width:10px;height:5px;background:#000;border:1px solid #000"></div><div class="ab" style="left:765px;top:461px;width:10px;height:15px;background:#FF99CC;border:1px solid #000"></div><div class="ab" style="left:765px;top:440px;width:10px;height:21px;background:#00FF00;border:1px solid #000"></div><div class="ab" style="left:29px;top:511px;width:754px;height:1px;background:#000"></div><div class="ab" style="left:29px;top:527px;width:753px;height:1px;background:#000"></div><div class="ab" style="left:29px;top:543px;width:753px;height:1px;background:#000"></div><div class="ab" style="left:29px;top:559px;width:753px;height:1px;background:#000"></div><div class="ab" style="left:29px;top:577px;width:754px;height:1px;background:#000"></div><div class="ab" style="left:29px;top:511px;width:1px;height:67px;background:#000"></div><div class="ab" style="left:77px;top:482px;width:1px;height:96px;background:#000"></div><div class="ab" style="left:101px;top:482px;width:1px;height:96px;background:#000"></div><div class="ab" style="left:126px;top:482px;width:1px;height:96px;background:#000"></div><div class="ab" style="left:150px;top:482px;width:1px;height:96px;background:#000"></div><div class="ab" style="left:174px;top:482px;width:1px;height:96px;background:#000"></div><div class="ab" style="left:199px;top:482px;width:1px;height:96px;background:#000"></div><div class="ab" style="left:223px;top:482px;width:1px;height:96px;background:#000"></div><div class="ab" style="left:247px;top:482px;width:1px;height:96px;background:#000"></div><div class="ab" style="left:271px;top:482px;width:1px;height:96px;background:#000"></div><div class="ab" style="left:296px;top:482px;width:1px;height:96px;background:#000"></div><div class="ab" style="left:320px;top:482px;width:1px;height:96px;background:#000"></div><div class="ab" style="left:344px;top:482px;width:1px;height:96px;background:#000"></div><div class="ab" style="left:369px;top:482px;width:1px;height:96px;background:#000"></div><div class="ab" style="left:393px;top:482px;width:1px;height:96px;background:#000"></div><div class="ab" style="left:417px;top:482px;width:1px;height:96px;background:#000"></div><div class="ab" style="left:442px;top:482px;width:1px;height:96px;background:#000"></div><div class="ab" style="left:466px;top:482px;width:1px;height:96px;background:#000"></div><div class="ab" style="left:490px;top:482px;width:1px;height:96px;background:#000"></div><div class="ab" style="left:515px;top:482px;width:1px;height:96px;background:#000"></div><div class="ab" style="left:539px;top:482px;width:1px;height:96px;background:#000"></div><div class="ab" style="left:563px;top:482px;width:1px;height:96px;background:#000"></div><div class="ab" style="left:588px;top:482px;width:1px;height:96px;background:#000"></div><div class="ab" style="left:612px;top:482px;width:1px;height:96px;background:#000"></div><div class="ab" style="left:636px;top:482px;width:1px;height:96px;background:#000"></div><div class="ab" style="left:660px;top:482px;width:1px;height:96px;background:#000"></div><div class="ab" style="left:685px;top:482px;width:1px;height:96px;background:#000"></div><div class="ab" style="left:709px;top:482px;width:1px;height:96px;background:#000"></div><div class="ab" style="left:733px;top:482px;width:1px;height:96px;background:#000"></div><div class="ab" style="left:758px;top:482px;width:1px;height:96px;background:#000"></div><div class="ab" style="left:782px;top:482px;width:1px;height:96px;background:#000"></div><div class="ab" style="left:78px;top:486px;width:23px;height:16px;overflow:hidden"><div class="t" style="left:2px;top:4px;font-size:10px;letter-spacing:0.45px;color:#000;width:40px">1975</div></div><div class="t" style="left:77px;top:514px;width:24px;text-align:center;font-size:10px;color:#000">0</div><div class="t" style="left:77px;top:530px;width:24px;text-align:center;font-size:10px;color:#000">26</div><div class="t" style="left:77px;top:546px;width:24px;text-align:center;font-size:10px;color:#000">2</div><div class="t" style="left:77px;top:562px;width:24px;text-align:center;font-size:10px;color:#000">1</div><div class="ab" style="left:102px;top:486px;width:24px;height:16px;overflow:hidden"><div class="t" style="left:2px;top:4px;font-size:10px;letter-spacing:0.45px;color:#000;width:40px">1976</div></div><div class="t" style="left:101px;top:514px;width:24px;text-align:center;font-size:10px;color:#000">0</div><div class="t" style="left:101px;top:530px;width:24px;text-align:center;font-size:10px;color:#000">36</div><div class="t" style="left:101px;top:546px;width:24px;text-align:center;font-size:10px;color:#000">2</div><div class="t" style="left:101px;top:562px;width:24px;text-align:center;font-size:10px;color:#000">2</div><div class="ab" style="left:127px;top:486px;width:23px;height:16px;overflow:hidden"><div class="t" style="left:2px;top:4px;font-size:10px;letter-spacing:0.45px;color:#000;width:40px">1977</div></div><div class="t" style="left:126px;top:514px;width:24px;text-align:center;font-size:10px;color:#000">0</div><div class="t" style="left:126px;top:530px;width:24px;text-align:center;font-size:10px;color:#000">31</div><div class="t" style="left:126px;top:546px;width:24px;text-align:center;font-size:10px;color:#000">5</div><div class="t" style="left:126px;top:562px;width:24px;text-align:center;font-size:10px;color:#000">2</div><div class="ab" style="left:151px;top:486px;width:23px;height:16px;overflow:hidden"><div class="t" style="left:2px;top:4px;font-size:10px;letter-spacing:0.45px;color:#000;width:40px">1978</div></div><div class="t" style="left:150px;top:514px;width:24px;text-align:center;font-size:10px;color:#000">0</div><div class="t" style="left:150px;top:530px;width:24px;text-align:center;font-size:10px;color:#000">40</div><div class="t" style="left:150px;top:546px;width:24px;text-align:center;font-size:10px;color:#000">8</div><div class="t" style="left:150px;top:562px;width:24px;text-align:center;font-size:10px;color:#000">5</div><div class="ab" style="left:175px;top:486px;width:24px;height:16px;overflow:hidden"><div class="t" style="left:2px;top:4px;font-size:10px;letter-spacing:0.45px;color:#000;width:40px">1979</div></div><div class="t" style="left:174px;top:514px;width:24px;text-align:center;font-size:10px;color:#000">0</div><div class="t" style="left:174px;top:530px;width:24px;text-align:center;font-size:10px;color:#000">41</div><div class="t" style="left:174px;top:546px;width:24px;text-align:center;font-size:10px;color:#000">8</div><div class="t" style="left:174px;top:562px;width:24px;text-align:center;font-size:10px;color:#000">3</div><div class="ab" style="left:200px;top:486px;width:23px;height:16px;overflow:hidden"><div class="t" style="left:2px;top:4px;font-size:10px;letter-spacing:0.45px;color:#000;width:40px">1980</div></div><div class="t" style="left:199px;top:514px;width:24px;text-align:center;font-size:10px;color:#000">0</div><div class="t" style="left:199px;top:530px;width:24px;text-align:center;font-size:10px;color:#000">42</div><div class="t" style="left:199px;top:546px;width:24px;text-align:center;font-size:10px;color:#000">5</div><div class="t" style="left:199px;top:562px;width:24px;text-align:center;font-size:10px;color:#000">2</div><div class="ab" style="left:224px;top:486px;width:23px;height:16px;overflow:hidden"><div class="t" style="left:2px;top:4px;font-size:10px;letter-spacing:0.45px;color:#000;width:40px">1981</div></div><div class="t" style="left:223px;top:514px;width:24px;text-align:center;font-size:10px;color:#000">0</div><div class="t" style="left:223px;top:530px;width:24px;text-align:center;font-size:10px;color:#000">40</div><div class="t" style="left:223px;top:546px;width:24px;text-align:center;font-size:10px;color:#000">3</div><div class="t" style="left:223px;top:562px;width:24px;text-align:center;font-size:10px;color:#000">3</div><div class="ab" style="left:248px;top:486px;width:23px;height:16px;overflow:hidden"><div class="t" style="left:2px;top:4px;font-size:10px;letter-spacing:0.45px;color:#000;width:40px">1982</div></div><div class="t" style="left:247px;top:514px;width:24px;text-align:center;font-size:10px;color:#000">0</div><div class="t" style="left:247px;top:530px;width:24px;text-align:center;font-size:10px;color:#000">49</div><div class="t" style="left:247px;top:546px;width:24px;text-align:center;font-size:10px;color:#000">6</div><div class="t" style="left:247px;top:562px;width:24px;text-align:center;font-size:10px;color:#000">3</div><div class="ab" style="left:272px;top:486px;width:24px;height:16px;overflow:hidden"><div class="t" style="left:2px;top:4px;font-size:10px;letter-spacing:0.45px;color:#000;width:40px">1983</div></div><div class="t" style="left:271px;top:514px;width:24px;text-align:center;font-size:10px;color:#000">0</div><div class="t" style="left:271px;top:530px;width:24px;text-align:center;font-size:10px;color:#000">49</div><div class="t" style="left:271px;top:546px;width:24px;text-align:center;font-size:10px;color:#000">4</div><div class="t" style="left:271px;top:562px;width:24px;text-align:center;font-size:10px;color:#000">1</div><div class="ab" style="left:297px;top:486px;width:23px;height:16px;overflow:hidden"><div class="t" style="left:2px;top:4px;font-size:10px;letter-spacing:0.45px;color:#000;width:40px">1984</div></div><div class="t" style="left:296px;top:514px;width:24px;text-align:center;font-size:10px;color:#000">0</div><div class="t" style="left:296px;top:530px;width:24px;text-align:center;font-size:10px;color:#000">47</div><div class="t" style="left:296px;top:546px;width:24px;text-align:center;font-size:10px;color:#000">3</div><div class="t" style="left:296px;top:562px;width:24px;text-align:center;font-size:10px;color:#000">2</div><div class="ab" style="left:321px;top:486px;width:23px;height:16px;overflow:hidden"><div class="t" style="left:2px;top:4px;font-size:10px;letter-spacing:0.45px;color:#000;width:40px">1985</div></div><div class="t" style="left:320px;top:514px;width:24px;text-align:center;font-size:10px;color:#000">0</div><div class="t" style="left:320px;top:530px;width:24px;text-align:center;font-size:10px;color:#000">47</div><div class="t" style="left:320px;top:546px;width:24px;text-align:center;font-size:10px;color:#000">3</div><div class="t" style="left:320px;top:562px;width:24px;text-align:center;font-size:10px;color:#000">1</div><div class="ab" style="left:345px;top:486px;width:24px;height:16px;overflow:hidden"><div class="t" style="left:2px;top:4px;font-size:10px;letter-spacing:0.45px;color:#000;width:40px">1986</div></div><div class="t" style="left:344px;top:514px;width:24px;text-align:center;font-size:10px;color:#000">0</div><div class="t" style="left:344px;top:530px;width:24px;text-align:center;font-size:10px;color:#000">47</div><div class="t" style="left:344px;top:546px;width:24px;text-align:center;font-size:10px;color:#000">1</div><div class="t" style="left:344px;top:562px;width:24px;text-align:center;font-size:10px;color:#000">1</div><div class="ab" style="left:370px;top:486px;width:23px;height:16px;overflow:hidden"><div class="t" style="left:2px;top:4px;font-size:10px;letter-spacing:0.45px;color:#000;width:40px">1987</div></div><div class="t" style="left:369px;top:514px;width:24px;text-align:center;font-size:10px;color:#000">0</div><div class="t" style="left:369px;top:530px;width:24px;text-align:center;font-size:10px;color:#000">45</div><div class="t" style="left:369px;top:546px;width:24px;text-align:center;font-size:10px;color:#000">2</div><div class="t" style="left:369px;top:562px;width:24px;text-align:center;font-size:10px;color:#000">2</div><div class="ab" style="left:394px;top:486px;width:23px;height:16px;overflow:hidden"><div class="t" style="left:2px;top:4px;font-size:10px;letter-spacing:0.45px;color:#000;width:40px">1988</div></div><div class="t" style="left:393px;top:514px;width:24px;text-align:center;font-size:10px;color:#000">0</div><div class="t" style="left:393px;top:530px;width:24px;text-align:center;font-size:10px;color:#000">40</div><div class="t" style="left:393px;top:546px;width:24px;text-align:center;font-size:10px;color:#000">3</div><div class="t" style="left:393px;top:562px;width:24px;text-align:center;font-size:10px;color:#000">1</div><div class="ab" style="left:418px;top:486px;width:24px;height:16px;overflow:hidden"><div class="t" style="left:2px;top:4px;font-size:10px;letter-spacing:0.45px;color:#000;width:40px">1989</div></div><div class="t" style="left:417px;top:514px;width:24px;text-align:center;font-size:10px;color:#000">0</div><div class="t" style="left:417px;top:530px;width:24px;text-align:center;font-size:10px;color:#000">39</div><div class="t" style="left:417px;top:546px;width:24px;text-align:center;font-size:10px;color:#000">4</div><div class="t" style="left:417px;top:562px;width:24px;text-align:center;font-size:10px;color:#000">1</div><div class="ab" style="left:443px;top:486px;width:23px;height:16px;overflow:hidden"><div class="t" style="left:2px;top:4px;font-size:10px;letter-spacing:0.45px;color:#000;width:40px">1990</div></div><div class="t" style="left:442px;top:514px;width:24px;text-align:center;font-size:10px;color:#000">2</div><div class="t" style="left:442px;top:530px;width:24px;text-align:center;font-size:10px;color:#000">48</div><div class="t" style="left:442px;top:546px;width:24px;text-align:center;font-size:10px;color:#000">0</div><div class="t" style="left:442px;top:562px;width:24px;text-align:center;font-size:10px;color:#000">4</div><div class="ab" style="left:467px;top:486px;width:23px;height:16px;overflow:hidden"><div class="t" style="left:2px;top:4px;font-size:10px;letter-spacing:0.45px;color:#000;width:40px">1991</div></div><div class="t" style="left:466px;top:514px;width:24px;text-align:center;font-size:10px;color:#000">0</div><div class="t" style="left:466px;top:530px;width:24px;text-align:center;font-size:10px;color:#000">41</div><div class="t" style="left:466px;top:546px;width:24px;text-align:center;font-size:10px;color:#000">0</div><div class="t" style="left:466px;top:562px;width:24px;text-align:center;font-size:10px;color:#000">0</div><div class="ab" style="left:491px;top:486px;width:24px;height:16px;overflow:hidden"><div class="t" style="left:2px;top:4px;font-size:10px;letter-spacing:0.45px;color:#000;width:40px">1992</div></div><div class="t" style="left:490px;top:514px;width:24px;text-align:center;font-size:10px;color:#000">0</div><div class="t" style="left:490px;top:530px;width:24px;text-align:center;font-size:10px;color:#000">45</div><div class="t" style="left:490px;top:546px;width:24px;text-align:center;font-size:10px;color:#000">0</div><div class="t" style="left:490px;top:562px;width:24px;text-align:center;font-size:10px;color:#000">4</div><div class="ab" style="left:516px;top:486px;width:23px;height:16px;overflow:hidden"><div class="t" style="left:2px;top:4px;font-size:10px;letter-spacing:0.45px;color:#000;width:40px">1993</div></div><div class="t" style="left:515px;top:514px;width:24px;text-align:center;font-size:10px;color:#000">1</div><div class="t" style="left:515px;top:530px;width:24px;text-align:center;font-size:10px;color:#000">38</div><div class="t" style="left:515px;top:546px;width:24px;text-align:center;font-size:10px;color:#000">0</div><div class="t" style="left:515px;top:562px;width:24px;text-align:center;font-size:10px;color:#000">7</div><div class="ab" style="left:540px;top:486px;width:23px;height:16px;overflow:hidden"><div class="t" style="left:2px;top:4px;font-size:10px;letter-spacing:0.45px;color:#000;width:40px">1994</div></div><div class="t" style="left:539px;top:514px;width:24px;text-align:center;font-size:10px;color:#000">0</div><div class="t" style="left:539px;top:530px;width:24px;text-align:center;font-size:10px;color:#000">33</div><div class="t" style="left:539px;top:546px;width:24px;text-align:center;font-size:10px;color:#000">0</div><div class="t" style="left:539px;top:562px;width:24px;text-align:center;font-size:10px;color:#000">0</div><div class="ab" style="left:564px;top:486px;width:24px;height:16px;overflow:hidden"><div class="t" style="left:2px;top:4px;font-size:10px;letter-spacing:0.45px;color:#000;width:40px">1995</div></div><div class="t" style="left:563px;top:514px;width:24px;text-align:center;font-size:10px;color:#000">0</div><div class="t" style="left:563px;top:530px;width:24px;text-align:center;font-size:10px;color:#000">31</div><div class="t" style="left:563px;top:546px;width:24px;text-align:center;font-size:10px;color:#000">0</div><div class="t" style="left:563px;top:562px;width:24px;text-align:center;font-size:10px;color:#000">1</div><div class="ab" style="left:589px;top:486px;width:23px;height:16px;overflow:hidden"><div class="t" style="left:2px;top:4px;font-size:10px;letter-spacing:0.45px;color:#000;width:40px">1996</div></div><div class="t" style="left:588px;top:514px;width:24px;text-align:center;font-size:10px;color:#000">1</div><div class="t" style="left:588px;top:530px;width:24px;text-align:center;font-size:10px;color:#000">31</div><div class="t" style="left:588px;top:546px;width:24px;text-align:center;font-size:10px;color:#000">0</div><div class="t" style="left:588px;top:562px;width:24px;text-align:center;font-size:10px;color:#000">0</div><div class="ab" style="left:613px;top:486px;width:23px;height:16px;overflow:hidden"><div class="t" style="left:2px;top:4px;font-size:10px;letter-spacing:0.45px;color:#000;width:40px">1997</div></div><div class="t" style="left:612px;top:514px;width:24px;text-align:center;font-size:10px;color:#000">0</div><div class="t" style="left:612px;top:530px;width:24px;text-align:center;font-size:10px;color:#000">30</div><div class="t" style="left:612px;top:546px;width:24px;text-align:center;font-size:10px;color:#000">0</div><div class="t" style="left:612px;top:562px;width:24px;text-align:center;font-size:10px;color:#000">0</div><div class="ab" style="left:637px;top:486px;width:23px;height:16px;overflow:hidden"><div class="t" style="left:2px;top:4px;font-size:10px;letter-spacing:0.45px;color:#000;width:40px">1998</div></div><div class="t" style="left:636px;top:514px;width:24px;text-align:center;font-size:10px;color:#000">0</div><div class="t" style="left:636px;top:530px;width:24px;text-align:center;font-size:10px;color:#000">36</div><div class="t" style="left:636px;top:546px;width:24px;text-align:center;font-size:10px;color:#000">0</div><div class="t" style="left:636px;top:562px;width:24px;text-align:center;font-size:10px;color:#000">0</div><div class="ab" style="left:661px;top:486px;width:24px;height:16px;overflow:hidden"><div class="t" style="left:2px;top:4px;font-size:10px;letter-spacing:0.45px;color:#000;width:40px">1999</div></div><div class="t" style="left:660px;top:514px;width:24px;text-align:center;font-size:10px;color:#000">0</div><div class="t" style="left:660px;top:530px;width:24px;text-align:center;font-size:10px;color:#000">34</div><div class="t" style="left:660px;top:546px;width:24px;text-align:center;font-size:10px;color:#000">0</div><div class="t" style="left:660px;top:562px;width:24px;text-align:center;font-size:10px;color:#000">1</div><div class="ab" style="left:686px;top:486px;width:23px;height:16px;overflow:hidden"><div class="t" style="left:2px;top:4px;font-size:10px;letter-spacing:0.45px;color:#000;width:40px">2000</div></div><div class="t" style="left:685px;top:514px;width:24px;text-align:center;font-size:10px;color:#000">0</div><div class="t" style="left:685px;top:530px;width:24px;text-align:center;font-size:10px;color:#000">18</div><div class="t" style="left:685px;top:546px;width:24px;text-align:center;font-size:10px;color:#000">4</div><div class="t" style="left:685px;top:562px;width:24px;text-align:center;font-size:10px;color:#000">2</div><div class="ab" style="left:710px;top:486px;width:23px;height:16px;overflow:hidden"><div class="t" style="left:2px;top:4px;font-size:10px;letter-spacing:0.45px;color:#000;width:40px">2001</div></div><div class="t" style="left:709px;top:514px;width:24px;text-align:center;font-size:10px;color:#000">0</div><div class="t" style="left:709px;top:530px;width:24px;text-align:center;font-size:10px;color:#000">27</div><div class="t" style="left:709px;top:546px;width:24px;text-align:center;font-size:10px;color:#000">7</div><div class="t" style="left:709px;top:562px;width:24px;text-align:center;font-size:10px;color:#000">2</div><div class="ab" style="left:734px;top:486px;width:24px;height:16px;overflow:hidden"><div class="t" style="left:2px;top:4px;font-size:10px;letter-spacing:0.45px;color:#000;width:40px">2002</div></div><div class="t" style="left:733px;top:514px;width:24px;text-align:center;font-size:10px;color:#000">1</div><div class="t" style="left:733px;top:530px;width:24px;text-align:center;font-size:10px;color:#000">7</div><div class="t" style="left:733px;top:546px;width:24px;text-align:center;font-size:10px;color:#000">4</div><div class="t" style="left:733px;top:562px;width:24px;text-align:center;font-size:10px;color:#000">1</div><div class="ab" style="left:759px;top:486px;width:23px;height:16px;overflow:hidden"><div class="t" style="left:2px;top:4px;font-size:10px;letter-spacing:0.45px;color:#000;width:40px">2003</div></div><div class="t" style="left:758px;top:514px;width:24px;text-align:center;font-size:10px;color:#000">0</div><div class="t" style="left:758px;top:530px;width:24px;text-align:center;font-size:10px;color:#000">4</div><div class="t" style="left:758px;top:546px;width:24px;text-align:center;font-size:10px;color:#000">3</div><div class="t" style="left:758px;top:562px;width:24px;text-align:center;font-size:10px;color:#000">1</div><div class="ab" style="left:32px;top:518px;width:6px;height:6px;background:#0000FF;border:1px solid #000"></div><div class="t" style="left:41px;top:516px;font-size:10px;letter-spacing:0.35px;color:#000">групп.</div><div class="ab" style="left:32px;top:534px;width:6px;height:6px;background:#00FF00;border:1px solid #000"></div><div class="t" style="left:41px;top:532px;font-size:10px;letter-spacing:0.35px;color:#000">легкие</div><div class="ab" style="left:32px;top:550px;width:6px;height:6px;background:#FF99CC;border:1px solid #000"></div><div class="t" style="left:41px;top:548px;font-size:10px;letter-spacing:0.35px;color:#000">тяж.</div><div class="ab" style="left:32px;top:566px;width:6px;height:6px;background:#000;border:1px solid #000"></div><div class="t" style="left:41px;top:564px;font-size:10px;letter-spacing:0.35px;color:#000">смерт.</div><div class="t" style="left:75px;top:594px;font-size:10px;letter-spacing:0.5px;color:#0000FF;text-decoration:underline;text-decoration-skip-ink:none">Титул</div><div class="ab" style="left:1006px;top:94px;width:18px;height:592px;background:#F6F4EC"></div><div class="ab" style="left:1006px;top:96px;width:16px;height:4px;background:#ECE9D8;border:1px solid #fff"></div><div class="ab" style="left:1006px;top:100px;width:16px;height:2px;background:#000"></div><div class="ab" style="left:1007px;top:103px;width:15px;height:14px;background:#ECE9D8;border-right:1px solid #A0A08C;border-bottom:1px solid #A0A08C"></div><div class="ab" style="left:1011px;top:107px;width:0;height:0;border-left:4px solid transparent;border-right:4px solid transparent;border-bottom:4px solid #000"></div><div class="ab" style="left:1007px;top:118px;width:15px;height:526px;background:#ECE9D8;border-top:1px solid #fff;border-left:1px solid #fff;border-right:1px solid #A0A08C;border-bottom:1px solid #8E8B7A"></div><div class="ab" style="left:1007px;top:670px;width:15px;height:15px;background:#ECE9D8;border-right:1px solid #A0A08C;border-bottom:1px solid #A0A08C"></div><div class="ab" style="left:1011px;top:676px;width:0;height:0;border-left:4px solid transparent;border-right:4px solid transparent;border-top:4px solid #000"></div><div class="ab" style="left:2px;top:686px;width:1020px;height:16px;background:#ECE9D8"></div><div class="ab" style="left:66px;top:700px;width:693px;height:1px;background:#7A7868"></div><div class="ab" style="left:2px;top:701px;width:1020px;height:1px;background:#fff"></div><div class="ab" style="left:7px;top:690px;width:1px;height:8px;background:#000"></div><div class="ab" style="left:8px;top:690px;width:0;height:0;border-top:4px solid transparent;border-bottom:4px solid transparent;border-right:4px solid #000"></div><div class="ab" style="left:23px;top:690px;width:0;height:0;border-top:4px solid transparent;border-bottom:4px solid transparent;border-right:4px solid #000"></div><div class="ab" style="left:39px;top:690px;width:0;height:0;border-top:4px solid transparent;border-bottom:4px solid transparent;border-left:4px solid #000"></div><div class="ab" style="left:55px;top:690px;width:0;height:0;border-top:4px solid transparent;border-bottom:4px solid transparent;border-left:4px solid #000"></div><div class="ab" style="left:59px;top:690px;width:1px;height:8px;background:#000"></div><div class="ab" style="left:65px;top:686px;width:1px;height:14px;background:#fff"></div><div class="ab" style="left:66px;top:685px;width:430px;height:1px;background:#A8A590"></div><div class="ab" style="left:664px;top:685px;width:95px;height:1px;background:#A8A590"></div><svg class="ab" style="left:490px;top:686px" width="180" height="16" viewBox="0 0 180 16"><path d="M5 0L11 14H167L175 0Z" fill="#fff"/><path d="M5 0L11 14M167 14L175 0" stroke="#000" stroke-width="1" fill="none"/><path d="M11 14.5H167" stroke="#444"/></svg><svg class="ab" style="left:67px;top:686px" width="10" height="16" viewBox="0 0 10 16"><path d="M7 1L1 14M2.5 11L4.5 14.5" stroke="#000" stroke-width="1.1" fill="none"/></svg><svg class="ab" style="left:179px;top:686px" width="10" height="16" viewBox="0 0 10 16"><path d="M7 1L1 14M2.5 11L4.5 14.5" stroke="#000" stroke-width="1.1" fill="none"/></svg><svg class="ab" style="left:339px;top:686px" width="10" height="16" viewBox="0 0 10 16"><path d="M7 1L1 14M2.5 11L4.5 14.5" stroke="#000" stroke-width="1.1" fill="none"/></svg><div class="t" style="left:80px;top:688px;font-size:11px;letter-spacing:0.85px;font-weight:normal;color:#000">Гл.гидротехник</div><div class="t" style="left:196px;top:688px;font-size:11px;letter-spacing:0.45px;font-weight:normal;color:#000">Динамика травматизма</div><div class="t" style="left:355px;top:688px;font-size:11px;letter-spacing:0.6px;font-weight:normal;color:#000">Динамика показателей</div><div class="t" style="left:504px;top:688px;font-size:12px;letter-spacing:0.43px;font-weight:bold;color:#000">Травматизм по тяжести</div><div class="t" style="left:672px;top:688px;font-size:11px;letter-spacing:0.75px;font-weight:normal;color:#000">График провер</div><div class="ab" style="left:755px;top:686px;width:4px;height:15px;background:#ECE9D8"></div><div class="ab" style="left:758px;top:686px;width:2px;height:15px;background:#000"></div><div class="ab" style="left:760px;top:686px;width:246px;height:15px;background:#F6F4EC"></div><div class="ab" style="left:760px;top:686px;width:16px;height:15px;background:#ECE9D8;border-right:1px solid #8E8B7A;border-left:1px solid #fff"></div><div class="ab" style="left:765px;top:690px;width:0;height:0;border-top:4px solid transparent;border-bottom:4px solid transparent;border-right:4px solid #000"></div><div class="ab" style="left:777px;top:686px;width:186px;height:15px;background:#ECE9D8;border-right:1px solid #8E8B7A;border-left:1px solid #fff;border-bottom:1px solid #8E8B7A"></div><div class="ab" style="left:985px;top:686px;width:16px;height:15px;background:#ECE9D8;border-right:1px solid #8E8B7A;border-left:1px solid #fff"></div><div class="ab" style="left:991px;top:690px;width:0;height:0;border-top:4px solid transparent;border-bottom:4px solid transparent;border-left:4px solid #000"></div><div class="ab" style="left:1001px;top:686px;width:5px;height:15px;background:#ECE9D8;border-left:1px solid #fff;border-right:1px solid #8E8B7A"></div><div class="ab" style="left:1006px;top:685px;width:17px;height:16px;background:#ECE9D8;border-left:1px solid #000;border-top:1px solid #8E8B7A"></div><div class="ab" style="left:0;top:702px;width:1024px;height:20px;background:#ECE9D8"></div><div class="t" style="left:4px;top:709px;font-size:11px;color:#000">Готово</div><div class="ab" style="left:699px;top:706px;width:33px;height:15px;border:1px solid #D2CFC0"></div><div class="ab" style="left:734px;top:706px;width:112px;height:15px;border:1px solid #D2CFC0"></div><div class="ab" style="left:847px;top:706px;width:25px;height:15px;border:1px solid #D2CFC0"></div><div class="ab" style="left:873px;top:706px;width:30px;height:15px;border:1px solid #D2CFC0"></div><div class="ab" style="left:904px;top:706px;width:26px;height:15px;border:1px solid #D2CFC0"></div><div class="ab" style="left:931px;top:706px;width:29px;height:15px;border:1px solid #D2CFC0"></div><div class="ab" style="left:961px;top:706px;width:26px;height:15px;border:1px solid #D2CFC0"></div><div class="ab" style="left:988px;top:706px;width:33px;height:15px;border:1px solid #D2CFC0"></div><div class="t" style="left:906px;top:709px;font-size:11px;color:#000">NUM</div><div class="ab" style="left:0;top:722px;width:1024px;height:46px;background:linear-gradient(to bottom,#3A7AE8 0,#4A8EEA 1px,#2A64DC 3px,#245EDB 6px,#245DDA 40px,#1E4FC0 46px)"></div><div class="ab" style="left:0;top:722px;width:96px;height:30px;border-radius:0 13px 13px 0;background:linear-gradient(to bottom,#3A8A3A 0,#5CB45C 2px,#48A848 20%,#3C9C3C 55%,#34903A 85%,#2A782A 100%);box-shadow:inset -4px 0 5px #2A6E2A"></div><div class="t" style="left:35px;top:727px;font-size:16.5px;letter-spacing:0.1px;font-weight:bold;font-style:italic;color:#fff;text-shadow:1px 1px 1px #1A4A1A">пуск</div><svg class="ab" style="left:10px;top:728px" width="20" height="18" viewBox="0 0 20 18"><path d="M2 1q3-1 7 0l-1 7q-4-1-7 0z" fill="#F05A24"/><path d="M11 2q3 1 7 0l-1 7q-4 1-7 0z" fill="#7CC040"/><path d="M1 9q3-1 7 0l-1 7q-4-1-7 0z" fill="#3A8AF0"/><path d="M10 10q3 1 7 0l-1 7q-4 1-7 0z" fill="#FFC42A"/></svg><svg class="ab" style="left:108px;top:737px" width="16" height="16" viewBox="0 0 16 16"><defs><radialGradient id="gq1" cx="0.35" cy="0.3" r="0.8"><stop offset="0" stop-color="#fff"/><stop offset="0.6" stop-color="#C8C8F0"/><stop offset="1" stop-color="#8A8AC8"/></radialGradient></defs><circle cx="8" cy="8" r="7.5" fill="url(#gq1)"/><path d="M4 11l9-8l-2 11z" fill="#8A86C8" opacity="0.9"/></svg><svg class="ab" style="left:130px;top:736px" width="17" height="17" viewBox="0 0 17 17"><path d="M3 9.5h9.5q0-6-5-6q-5 0-5 6q0 5.5 5.5 5.5q3 0 4.5-2" fill="none" stroke="#2E9AE8" stroke-width="2.6"/><path d="M1 15q2-9 15-13" fill="none" stroke="#3AA8F0" stroke-width="1"/></svg><svg class="ab" style="left:154px;top:737px" width="16" height="16" viewBox="0 0 16 16"><rect x="0.5" y="0.5" width="14" height="14" rx="2" fill="#2A7AE0" stroke="#1A4AA0" stroke-width="0.8"/><path d="M11 4q-6-2-8 3q0 6 8 5" fill="none" stroke="#F8F0C8" stroke-width="2.8"/><circle cx="14" cy="5" r="1.3" fill="#E84A20"/></svg><svg class="ab" style="left:177px;top:737px" width="16" height="16" viewBox="0 0 16 16"><path d="M1 9l7-8l7 6l-7 8z" fill="#F4F4F4" stroke="#222" stroke-width="1"/><path d="M15 1l-9 7h3l-8 7l10-6h-3z" fill="#F8A820" stroke="#C06010" stroke-width="0.5"/></svg><div class="ab" style="left:227px;top:725px;width:128px;height:24px;border-radius:3px;background:linear-gradient(#4A92F8,#3C81F3 30%,#3575E8);box-shadow:inset -1px -1px 1px #2A5ACC"></div><div class="t" style="left:255px;top:732px;font-size:11px;color:#fff"><span style="color:#F8D070">2</span> Проводник</div><div class="ab" style="left:342px;top:736px;width:0;height:0;border-left:3px solid transparent;border-right:3px solid transparent;border-top:3px solid #fff"></div><div class="ab" style="left:357px;top:725px;width:130px;height:24px;border-radius:3px;background:linear-gradient(#4A92F8,#3C81F3 30%,#3575E8);box-shadow:inset -1px -1px 1px #2A5ACC"></div><div class="t" style="left:385px;top:732px;font-size:11px;color:#fff"><span style="color:#F8D070">2</span> Microsoft O...</div><div class="ab" style="left:474px;top:736px;width:0;height:0;border-left:3px solid transparent;border-right:3px solid transparent;border-top:3px solid #fff"></div><div class="ab" style="left:487px;top:725px;width:128px;height:24px;border-radius:3px;background:linear-gradient(#1C4FC0,#1A48B0);box-shadow:inset 1px 1px 1px #0A2A80"></div><div class="t" style="left:515px;top:732px;font-size:11px;color:#fff">Microsoft Excel...</div><svg class="ab" style="left:236px;top:729px" width="17" height="16" viewBox="0 0 17 16"><path d="M0.5 3.5h6l1 2h8v9h-15z" fill="#F8D878" stroke="#B08A20"/><path d="M0.5 6.5h15v8h-15z" fill="#F6C850"/></svg><svg class="ab" style="left:366px;top:729px" width="16" height="16" viewBox="0 0 16 16"><rect x="0.5" y="0.5" width="15" height="15" fill="#E8EEF8" stroke="#3A5AA0"/><text x="2" y="13" font-family="Liberation Serif" font-style="italic" font-weight="bold" font-size="13" fill="#2A4AA0">W</text></svg><svg class="ab" style="left:496px;top:729px" width="16" height="16" viewBox="0 0 16 16"><rect x="0.5" y="0.5" width="15" height="15" fill="#F0F4E8" stroke="#2F6A2A"/><path d="M3 3l10 10M13 3l-10 10" stroke="#2E8A2E" stroke-width="3"/></svg><svg class="ab" style="left:625px;top:729px" width="32" height="31" viewBox="0 0 32 31"><path d="M1 20l14-6l16 5v6l-14 5l-16-5z" fill="#D8DADF" stroke="#5A5E68" stroke-width="0.8"/><path d="M1 20l16 5l14-6" fill="none" stroke="#8A8E98" stroke-width="0.8"/><path d="M17 25v5" stroke="#6A6E78"/><path d="M18 26l9-3" stroke="#222" stroke-width="2"/><rect x="11" y="1" width="15" height="18" fill="#8C82DA" stroke="#4A3E98" stroke-width="0.8"/><rect x="14" y="2" width="9" height="6" fill="#E8E8F8"/><rect x="15" y="11" width="8" height="8" fill="#C8C4F0"/><rect x="16" y="12" width="3" height="5" fill="#4A3E98"/></svg><svg class="ab" style="left:665px;top:736px" width="31" height="17" viewBox="0 0 31 17"><path d="M1 6l11-5l18 4v6l-11 5l-18-4z" fill="#B8BCC4" stroke="#4A4E58" stroke-width="0.8"/><path d="M1 6l18 4l11-5" fill="#E8EAEE" stroke="#6A6E78" stroke-width="0.8"/><path d="M3 6l9-4l15 3l-8 4z" fill="#F4F5F8"/><ellipse cx="13" cy="5" rx="5" ry="2" fill="#C8CCD4"/><path d="M19 11v5" stroke="#6A6E78"/><rect x="22" y="9" width="4" height="3" fill="#5A5E68"/></svg><svg class="ab" style="left:704px;top:736px" width="31" height="17" viewBox="0 0 31 17"><path d="M1 6l11-5l18 4v6l-11 5l-18-4z" fill="#B8BCC4" stroke="#4A4E58" stroke-width="0.8"/><path d="M1 6l18 4l11-5" fill="#E8EAEE" stroke="#6A6E78" stroke-width="0.8"/><path d="M3 6l9-4l15 3l-8 4z" fill="#F4F5F8"/><ellipse cx="13" cy="5" rx="5" ry="2" fill="#C8CCD4"/><path d="M19 11v5" stroke="#6A6E78"/><rect x="22" y="9" width="4" height="3" fill="#5A5E68"/></svg><svg class="ab" style="left:743px;top:736px" width="31" height="17" viewBox="0 0 31 17"><path d="M1 6l11-5l18 4v6l-11 5l-18-4z" fill="#B8BCC4" stroke="#4A4E58" stroke-width="0.8"/><path d="M1 6l18 4l11-5" fill="#E8EAEE" stroke="#6A6E78" stroke-width="0.8"/><path d="M3 6l9-4l15 3l-8 4z" fill="#F4F5F8"/><ellipse cx="13" cy="5" rx="5" ry="2" fill="#C8CCD4"/><path d="M19 11v5" stroke="#6A6E78"/><rect x="22" y="9" width="4" height="3" fill="#5A5E68"/></svg><svg class="ab" style="left:782px;top:729px" width="30" height="30" viewBox="0 0 30 30"><circle cx="14" cy="15" r="13.5" fill="#E6E8F8" stroke="#6A70A8" stroke-width="0.8"/><circle cx="14" cy="15" r="9" fill="#D0D4F0"/><circle cx="14" cy="15" r="4.5" fill="#F0C8E8"/><circle cx="14" cy="15" r="2.2" fill="#5A5E98"/><path d="M23 7v14" stroke="#5A4EC0" stroke-width="2"/><path d="M23 7q5 2 4 8" fill="none" stroke="#5A4EC0" stroke-width="2"/><ellipse cx="19.5" cy="22" rx="4.5" ry="3.8" fill="#6A5ED0"/></svg><svg class="ab" style="left:859px;top:729px" width="10" height="6" viewBox="0 0 10 6"><path d="M0.5 0.5l2.5 2.5l-2.5 2.5M5 0.5l2.5 2.5l-2.5 2.5" fill="none" stroke="#9AC4F8" stroke-width="1.2"/></svg><div class="ab" style="left:877px;top:737px;width:16px;height:16px;background:#3C6CD8"></div><div class="t" style="left:877px;top:740px;font-size:11px;color:#fff">RU</div><div class="ab" style="left:905px;top:736px;width:6px;height:4px;border:1px solid #fff;border-top-width:2px"></div><div class="ab" style="left:902px;top:739px;width:6px;height:4px;border:1px solid #fff;border-top-width:2px;background:#245DDA"></div><div class="ab" style="left:904px;top:746px;width:0;height:0;border-left:3px solid transparent;border-right:3px solid transparent;border-top:3px solid #fff"></div><div class="ab" style="left:928px;top:722px;width:96px;height:46px;background:linear-gradient(to bottom,#1A9AF0 0,#0F8CE8 3px,#0E8AE6 40px,#0C7AD8 46px);border-left:1px solid #0A60C0;box-shadow:inset 1px 0 0 #6AC0F8"></div><svg class="ab" style="left:917px;top:734px" width="20" height="20" viewBox="0 0 20 20"><circle cx="10" cy="10" r="9" fill="#3A8AF0" stroke="#fff" stroke-width="1.2"/><path d="M12 5l-5 5l5 5" fill="none" stroke="#fff" stroke-width="2"/></svg><div class="t" style="left:963px;top:731px;font-size:11px;color:#fff">19:22</div><div class="t" style="left:957px;top:748px;font-size:11px;color:#fff">четверг</div></body></html>
